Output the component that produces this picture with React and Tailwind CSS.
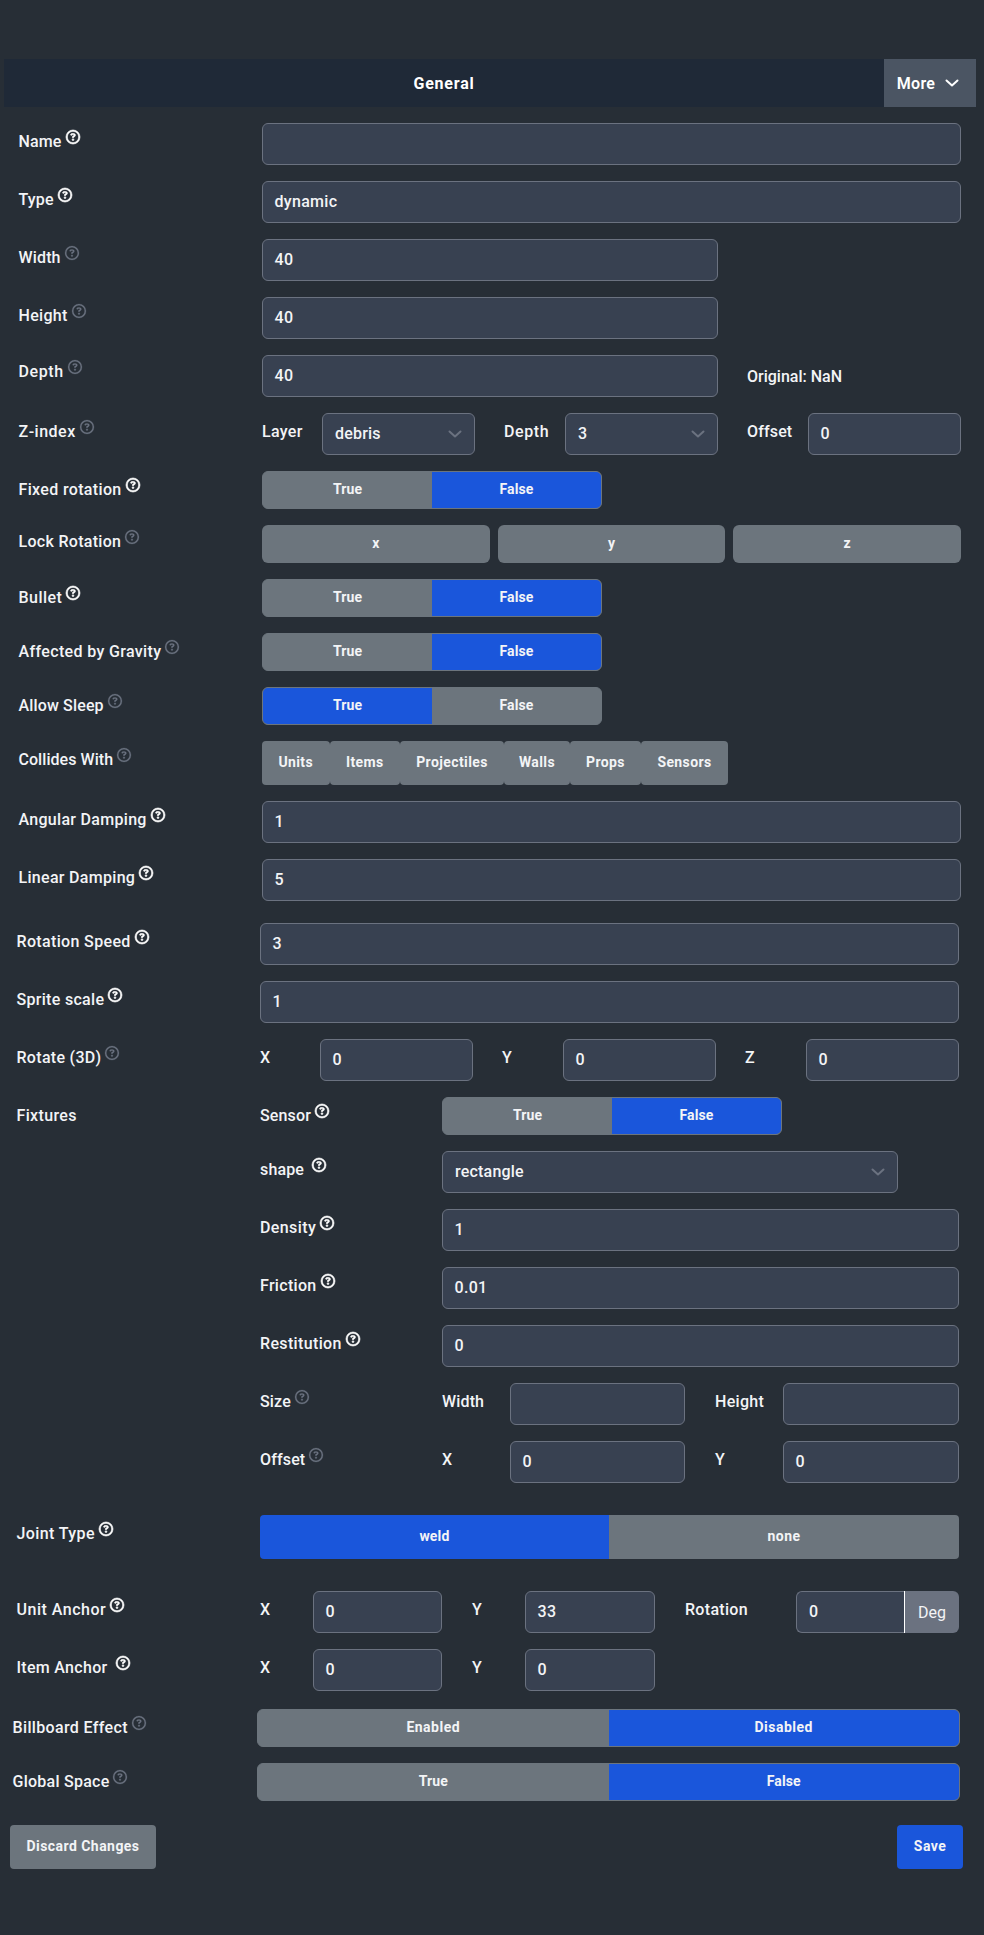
import { FaRegCircleQuestion } from "react-icons/fa6";

function Help({ strong }) {
  return (
    <FaRegCircleQuestion
      stroke="currentColor"
      strokeWidth={strong ? 24 : 8}
      className={strong ? "size-3.5 shrink-0 overflow-visible text-white" : "size-3.5 shrink-0 overflow-visible text-[#6b7280]"}
    />
  );
}

function Chevron({ className }) {
  return (
    <svg viewBox="0 0 14 8" fill="none" stroke="currentColor" strokeWidth="2" strokeLinecap="round" strokeLinejoin="round" className={className}>
      <path d="M1.5 1.5 7 6.5l5.5-5" />
    </svg>
  );
}

function Label({ children, help, className = "pt-[7px]", track = "tracking-[0.15px]", gap = "gap-1" }) {
  return (
    <div className={`flex h-0 items-start whitespace-nowrap leading-6 ${gap} ${className}`}>
      <span className={track}>{children}</span>
      {help && <Help strong={help === "strong"} />}
    </div>
  );
}

function Field({ value, className = "w-full" }) {
  return (
    <div className={`flex h-[42px] items-center rounded-md border border-[#6b7280] bg-[#384151] pl-[11.5px] tracking-[0.3px] ${className}`}>
      {value}
    </div>
  );
}

function Select({ value, className }) {
  return (
    <div className={`flex h-[42px] items-center justify-between rounded-md border border-[#6b7280] bg-[#384151] pr-3 pl-3 tracking-[0.2px] ${className}`}>
      {value}
      <Chevron className="h-2 w-3.5 text-[#6b7280]" />
    </div>
  );
}

function Toggle({ options, active, className = "w-[340px]" }) {
  return (
    <div className={`flex h-[38px] overflow-hidden rounded-md border border-[#6c757d] bg-[#6c757d] text-sm font-bold ${className}`}>
      {options.map((o, i) => (
        <div key={o} className={`flex flex-1 items-center justify-center pb-0.5 ${o.length > 5 ? "tracking-[0.5px]" : "tracking-[0.1px]"} ${i === active ? "bg-[#1a56db]" : ""}`}>
          {o}
        </div>
      ))}
    </div>
  );
}

function Row({ label, help, labelClass, gap, track, children }) {
  return (
    <div className="flex items-start">
      <div className="w-[244px] shrink-0 pl-[0.5px]">
        <Label help={help} className={labelClass} gap={gap} track={track}>{label}</Label>
      </div>
      {children}
    </div>
  );
}

function SubRow({ label, help, gap, track, children }) {
  return (
    <div className="flex items-start">
      <div className="w-[182px] shrink-0">
        <Label help={help} gap={gap} track={track}>{label}</Label>
      </div>
      {children}
    </div>
  );
}

function Cell({ label, className, track }) {
  return (
    <div className={`shrink-0 ${className}`}>
      <Label track={track}>{label}</Label>
    </div>
  );
}

const tf = ["True", "False"];

export default function App() {
  return (
    <div className="h-[1935px] w-[984px] overflow-hidden bg-[#272e36] pt-[59px] font-['Roboto',sans-serif] text-base font-medium text-[#f3f4f6]">
      <header className="ml-1 flex h-12 w-[972px] items-center bg-[#1f2937] font-semibold text-white">
        <div className="flex-1 pt-0.5 text-center font-bold tracking-[0.8px]">General</div>
        <div className="flex h-12 w-[92px] items-center justify-center gap-2.5 bg-[#4b5563] pr-1">
          <span className="pt-0.5 tracking-[0.3px]">More</span>
          <Chevron className="h-2 w-3.5" />
        </div>
      </header>

      <section className="mt-4 ml-[18px] flex w-[943px] flex-col gap-4">
        <Row label="Name" help="strong"><Field /></Row>
        <Row label="Type" help="strong"><Field value="dynamic" /></Row>
        <Row label="Width" help="muted"><Field value="40" className="w-[456px]" /></Row>
        <Row label="Height" help="muted" track="tracking-[0.3px]"><Field value="40" className="w-[456px]" /></Row>
        <Row label="Depth" help="muted" labelClass="pt-[5px]" track="tracking-[0.6px]">
          <Field value="40" className="w-[456px]" />
          <div className="ml-[29px] pt-2.5">Original: NaN</div>
        </Row>
        <Row label="Z-index" help="muted" track="tracking-[0.5px]">
          <Cell label="Layer" className="w-[60px]" track="tracking-[0.3px]" />
          <Select value="debris" className="w-[153px]" />
          <Cell label="Depth" className="ml-[29px] w-[61px]" track="tracking-[0.6px]" />
          <Select value="3" className="w-[153px]" />
          <Cell label="Offset" className="ml-[29px] w-[61px]" />
          <Field value="0" className="w-[153px]" />
        </Row>
        <Row label="Fixed rotation" help="strong" track="tracking-[0.35px]"><Toggle options={tf} active={1} /></Row>
        <Row label="Lock Rotation" help="muted" labelClass="pt-[5px]" track="tracking-[0.3px]">
          <div className="grid w-full grid-cols-3 gap-2">
            {["x", "y", "z"].map((axis) => (
              <div key={axis} className="flex h-[38px] items-center justify-center rounded-md bg-[#6c757d] pb-0.5 text-sm font-bold">{axis}</div>
            ))}
          </div>
        </Row>
        <Row label="Bullet" help="strong" track="tracking-[0.45px]"><Toggle options={tf} active={1} /></Row>
        <Row label="Affected by Gravity" help="muted" track="tracking-[0.35px]"><Toggle options={tf} active={1} /></Row>
        <Row label="Allow Sleep" help="muted"><Toggle options={tf} active={0} /></Row>
        <Row label="Collides With" help="muted" track="tracking-[0.05px]">
          <div className="flex text-sm font-bold">
            {[["Units", "w-[67.5px]"], ["Items", "w-[70.5px]"], ["Projectiles", "w-[104px]"], ["Walls", "w-[66px]"], ["Props", "w-[71px]"], ["Sensors", "w-[87px]"]].map(([name, w]) => (
              <div key={name} className={`flex h-11 items-center justify-center rounded bg-[#6c757d] pb-0.5 tracking-[0.4px] ${w}`}>{name}</div>
            ))}
          </div>
        </Row>
        <Row label="Angular Damping" help="strong" track="tracking-[0.3px]"><Field value="1" /></Row>
        <Row label="Linear Damping" help="strong" track="tracking-[0.3px]"><Field value="5" /></Row>
      </section>

      <section className="mt-[22px] ml-4 flex w-[943px] flex-col gap-4">
        <Row label="Rotation Speed" help="strong" track="tracking-[0.35px]"><Field value="3" /></Row>
        <Row label="Sprite scale" help="strong" track="tracking-[0.3px]"><Field value="1" /></Row>
        <Row label="Rotate (3D)" help="muted" track="tracking-[0.3px]">
          <Cell label="X" className="w-[60px]" />
          <Field value="0" className="w-[153px]" />
          <Cell label="Y" className="ml-[29px] w-[61px]" />
          <Field value="0" className="w-[153px]" />
          <Cell label="Z" className="ml-[29px] w-[61px]" />
          <Field value="0" className="w-[153px]" />
        </Row>
        <Row label="Fixtures" track="tracking-[0.35px]">
          <div className="flex w-full flex-col gap-4">
            <SubRow label="Sensor" help="strong"><Toggle options={tf} active={1} /></SubRow>
            <SubRow label="shape" help="strong" gap="gap-2"><Select value="rectangle" className="w-[456px]" /></SubRow>
            <SubRow label="Density" help="strong" track="tracking-[0.4px]"><Field value="1" /></SubRow>
            <SubRow label="Friction" help="strong" track="tracking-[0.3px]"><Field value="0.01" /></SubRow>
            <SubRow label="Restitution" help="strong" track="tracking-[0.35px]"><Field value="0" /></SubRow>
            <SubRow label="Size" help="muted">
              <Cell label="Width" className="w-[68px]" />
              <Field className="w-[175px]" />
              <Cell label="Height" className="ml-[30px] w-[68px]" track="tracking-[0.3px]" />
              <Field className="w-[176px]" />
            </SubRow>
            <SubRow label="Offset" help="muted">
              <Cell label="X" className="w-[68px]" />
              <Field value="0" className="w-[175px]" />
              <Cell label="Y" className="ml-[30px] w-[68px]" />
              <Field value="0" className="w-[176px]" />
            </SubRow>
          </div>
        </Row>
      </section>

      <section className="mt-8 ml-4 flex w-[943px] flex-col gap-4">
        <Row label="Joint Type" help="strong" track="tracking-[0.4px]">
          <div className="mb-4 flex h-11 w-full overflow-hidden rounded text-sm font-bold">
            <div className="flex w-[349px] items-center justify-center bg-[#1a56db] pb-0.5 tracking-[0.2px]">weld</div>
            <div className="flex flex-1 items-center justify-center bg-[#6c757d] pb-0.5 tracking-[0.4px]">none</div>
          </div>
        </Row>
        <Row label="Unit Anchor" help="strong" track="tracking-[0.5px]">
          <Cell label="X" className="w-[53px]" />
          <Field value="0" className="w-[129px]" />
          <Cell label="Y" className="ml-[30px] w-[53px]" />
          <Field value="33" className="w-[130px]" />
          <Cell label="Rotation" className="ml-[30px] w-[111px]" track="tracking-[0.3px]" />
          <div className="flex w-[163px]">
            <div className="flex h-[42px] w-[108px] items-center rounded-l-md border border-r-0 border-[#6b7280] bg-[#384151] pl-3">0</div>
            <div className="flex h-[42px] w-[55px] items-center justify-center rounded-r-md border-l border-white bg-[#6b7280] pt-0.5 font-normal">Deg</div>
          </div>
        </Row>
        <Row label="Item Anchor" help="strong" gap="gap-2" track="tracking-[0.3px]">
          <Cell label="X" className="w-[53px]" />
          <Field value="0" className="w-[129px]" />
          <Cell label="Y" className="ml-[30px] w-[53px]" />
          <Field value="0" className="w-[130px]" />
        </Row>
      </section>

      <section className="mt-[18px] ml-3 flex w-[948px] flex-col gap-4">
        <Row label="Billboard Effect" help="muted" track="tracking-[0.35px]"><Toggle options={["Enabled", "Disabled"]} active={1} className="ml-px w-[703px]" /></Row>
        <Row label="Global Space" help="muted" track="tracking-[0.25px]"><Toggle options={tf} active={1} className="ml-px w-[703px]" /></Row>
      </section>

      <footer className="mt-6 ml-2.5 flex w-[953px] justify-between text-sm font-bold tracking-[0.45px]">
        <div className="flex h-11 w-[146px] items-center justify-center rounded bg-[#6c757d] pb-0.5">Discard Changes</div>
        <div className="flex h-11 w-[66px] items-center justify-center rounded bg-[#1a56db] pb-0.5">Save</div>
      </footer>
    </div>
  );
}
